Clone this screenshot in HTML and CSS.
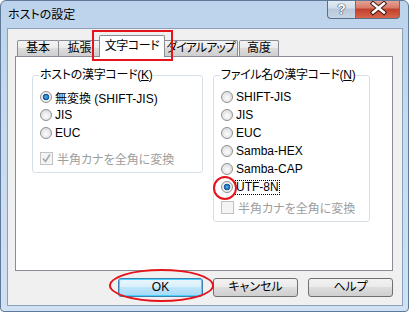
FILE: index.html
```html
<!DOCTYPE html>
<html lang="ja">
<head>
    <meta charset="UTF-8">
    <title>ホストの設定</title>
    <link rel="stylesheet" href="styles.css">
</head>
<body>
    <div class="window">
        <div class="titlebar">
            <span class="title">ホストの設定</span>
            <div class="caption-buttons">
                <div class="cap-btn cap-help">?</div>
                <div class="cap-btn cap-close">
                    <svg width="45" height="18" viewBox="0 0 45 18">
                        <path d="M17 4.5 L28 13.5 M28 4.5 L17 13.5" stroke="#4a1c16" stroke-width="4.5" stroke-linecap="square"/>
                        <path d="M17 4.5 L28 13.5 M28 4.5 L17 13.5" stroke="#ffffff" stroke-width="2.4" stroke-linecap="square"/>
                    </svg>
                </div>
            </div>
        </div>
        <div class="client">
            <div class="tabs">
                <div class="tab tab-basic">基本</div>
                <div class="tab tab-ext">拡張</div>
                <div class="tab tab-active">文字コード</div>
                <div class="tab tab-dial">ダイアルアップ</div>
                <div class="tab tab-adv">高度</div>
            </div>
            <div class="panel">
                <fieldset class="group group-host">
                    <legend>ホストの漢字コード(<u>K</u>)</legend>
                    <div class="options">
                        <div class="opt"><span class="radio checked"></span>無変換 (SHIFT-JIS)</div>
                        <div class="opt"><span class="radio"></span>JIS</div>
                        <div class="opt"><span class="radio"></span>EUC</div>
                        <div class="opt opt-check disabled">
                            <span class="check">
                                <svg width="11" height="11" viewBox="0 0 11 11"><path d="M2 5.5 L4.5 8.5 L9 1.5" fill="none" stroke="#a8a8a8" stroke-width="1.6"/></svg>
                            </span>半角カナを全角に変換
                        </div>
                    </div>
                </fieldset>
                <fieldset class="group group-file">
                    <legend>ファイル名の漢字コード(<u>N</u>)</legend>
                    <div class="options">
                        <div class="opt"><span class="radio"></span>SHIFT-JIS</div>
                        <div class="opt"><span class="radio"></span>JIS</div>
                        <div class="opt"><span class="radio"></span>EUC</div>
                        <div class="opt"><span class="radio"></span>Samba-HEX</div>
                        <div class="opt"><span class="radio"></span>Samba-CAP</div>
                        <div class="opt"><span class="radio checked"></span><span class="focus">UTF-8N</span></div>
                        <div class="opt opt-check disabled"><span class="check"></span>半角カナを全角に変換</div>
                    </div>
                </fieldset>
            </div>
            <div class="buttons">
                <div class="btn btn-default">OK</div>
                <div class="btn">キャンセル</div>
                <div class="btn">ヘルプ</div>
            </div>
        </div>
        <div class="mark mark-tab"></div>
        <div class="mark mark-radio"></div>
        <div class="mark mark-ok"></div>
    </div>
</body>
</html>
```

FILE: styles.css
```css
* {
    box-sizing: border-box;
}

body {
    margin: 0;
    font-family: "Liberation Sans", "Noto Sans CJK JP", sans-serif;
    font-size: 12px;
    font-feature-settings: "palt";
    color: #000;
    background: #fff;
}

.window {
    position: relative;
    width: 409px;
    height: 312px;
    border: 1px solid #5f7a98;
    border-radius: 6px 6px 4px 4px;
    background: linear-gradient(#bcd3eb, #c6daf0 40%, #cfe1f3);
    overflow: hidden;
}

/* title bar */
.titlebar {
    display: flex;
    height: 27px;
}

.title {
    padding: 7px 0 0 7px;
    line-height: 14px;
}

.caption-buttons {
    display: flex;
    margin-left: auto;
    margin-right: 8px;
    margin-top: -1px;
}

.cap-btn {
    height: 19px;
    border: 1px solid #5b6f88;
    border-top: none;
}

.cap-help {
    width: 28px;
    border-right: none;
    border-radius: 0 0 0 4px;
    background: linear-gradient(#e4ecf5, #d2deeb 45%, #b8c8da 50%, #c7d6e6);
    color: #fff;
    font-weight: bold;
    font-size: 14px;
    line-height: 18px;
    text-align: center;
    text-shadow: 0 0 1px #2c3a4a, 0 0 1px #2c3a4a, 0 0 1px #2c3a4a;
}

.cap-close {
    width: 45px;
    border-radius: 0 0 4px 0;
    background: linear-gradient(#e8a89a, #d77a68 45%, #c0402c 50%, #d8644c);
}

.cap-close svg {
    display: block;
    margin-top: -1px;
}

/* client area */
.client {
    width: 396px;
    height: 278px;
    margin-left: 6px;
    border: 1px solid #8ba1ba;
    background: #f0f0f0;
    padding: 6px 9px 0 7px;
}

.tabs {
    display: flex;
    align-items: flex-start;
    height: 21px;
    padding-left: 2px;
}

.tab {
    height: 16px;
    margin-top: 5px;
    border: 1px solid #898c95;
    border-bottom: none;
    border-radius: 2px 2px 0 0;
    background: linear-gradient(#f3f3f3, #ebebeb 45%, #dcdcdc 50%, #cfcfcf);
    text-align: center;
    line-height: 15px;
    white-space: nowrap;
}

.tab-basic {
    width: 42px;
}

.tab-ext {
    width: 43px;
    margin-left: -1px;
}

.tab-active {
    position: relative;
    z-index: 1;
    width: 66px;
    height: 22px;
    margin: 0 -2px;
    background: #fff;
    padding-top: 3px;
    letter-spacing: -0.4px;
}

.tab-dial {
    width: 75px;
    letter-spacing: -1px;
}

.tab-adv {
    width: 40px;
    margin-left: 1px;
}

.panel {
    display: flex;
    align-items: flex-start;
    gap: 10px;
    height: 215px;
    border: 1px solid #898c95;
    background: #fff;
    padding: 11px 0 0 16px;
}

.group {
    margin: 0;
    border: 1px solid #d5dfe5;
    border-radius: 3px;
    padding: 0 6px 5px 6px;
}

.group legend {
    padding: 0 1px;
    line-height: 14px;
    letter-spacing: -0.3px;
}

.group-host {
    width: 171px;
}

.group-file {
    width: 157px;
}

.options {
    padding-top: 6px;
}

.opt {
    display: flex;
    align-items: center;
    height: 18px;
    white-space: nowrap;
}

.radio {
    width: 12px;
    height: 12px;
    margin: 0 3px 0 1px;
    border: 1px solid #8e8f8f;
    border-radius: 50%;
    background: radial-gradient(circle at 50% 60%, #fdfdfd, #e0e0e0 70%, #cfcfcf);
    flex-shrink: 0;
}

.radio.checked {
    background: radial-gradient(circle, #59b3f2 0, #1a67ac 2.5px, #1a4e86 3.2px, #f4f4f4 3.6px, #e2e2e2);
}

.check {
    width: 13px;
    height: 13px;
    margin: 0 4px 0 1px;
    border: 1px solid #c2c2c2;
    background: #f4f4f4;
    flex-shrink: 0;
}

.check svg {
    display: block;
}

.group-host .opt-check {
    margin-top: 7px;
}

.group-file .opt-check {
    margin-top: 2px;
}

.disabled {
    color: #9d9d9d;
}

.focus {
    outline: 1px dotted #000;
    line-height: 13px;
}

/* dialog buttons */
.buttons {
    display: flex;
    justify-content: flex-end;
    gap: 10px;
    margin-top: 7px;
}

.btn {
    width: 85px;
    height: 19px;
    border: 1px solid #707070;
    border-radius: 3px;
    background: linear-gradient(#f2f2f2, #ebebeb 45%, #dddddd 50%, #cfcfcf);
    text-align: center;
    line-height: 17px;
}

.btn-default {
    border-color: #3c7fb1;
    box-shadow: inset 0 0 0 1px #48d1fe;
    background: linear-gradient(#eaf6fd, #d9f0fc 45%, #bee6fd 50%, #a7d9f5);
}

/* red annotation marks */
.mark {
    position: absolute;
    border: 2px solid #e5131b;
}

.mark-tab {
    left: 91px;
    top: 29px;
    width: 81px;
    height: 31px;
}

.mark-radio {
    left: 212px;
    top: 175px;
    width: 24px;
    height: 24px;
    border-radius: 50%;
}

.mark-ok {
    left: 108px;
    top: 268px;
    width: 105px;
    height: 33px;
    border-radius: 50%;
}
```
